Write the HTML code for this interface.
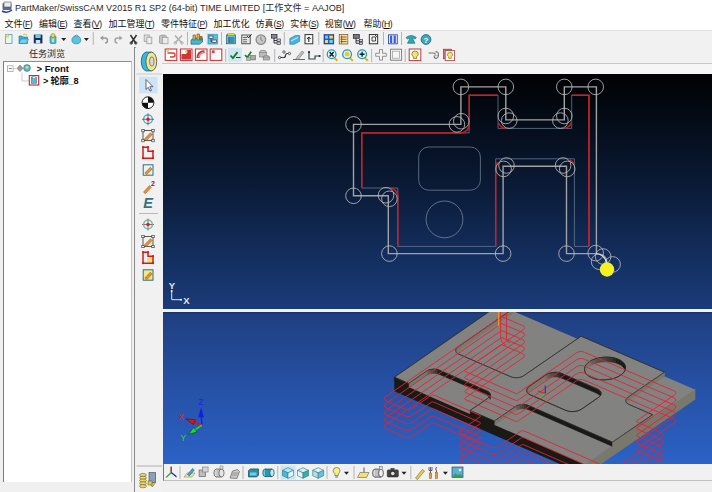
<!DOCTYPE html>
<html><head><meta charset="utf-8">
<style>
html,body{margin:0;padding:0;}
body{width:712px;height:492px;overflow:hidden;background:#f0f0f0;position:relative;font-family:"Liberation Sans","Noto Sans CJK SC",sans-serif;color:#111;}
.abs{position:absolute;}
#title{left:0;top:0;width:712px;height:16px;background:#fff;}
#title .t{position:absolute;left:15px;top:1px;font-size:9.5px;line-height:14px;white-space:nowrap;color:#2a2a2a;transform-origin:0 0;transform:scaleX(0.958);}
#menu i{font-style:normal;font-size:8.6px;letter-spacing:-0.45px;}
#menu{left:0;top:16px;width:712px;height:14px;background:#fff;}
#menu span{position:absolute;top:1px;font-size:9px;line-height:14px;white-space:nowrap;color:#111;}
#tb1{left:0;top:30px;width:712px;height:17.5px;background:#f1f1f1;border-bottom:1px solid #a4a4a4;border-top:1px solid #e2e2e2;box-sizing:border-box;}
#left{left:0;top:47px;width:134px;height:445px;background:#f0f0f0;border-right:1px solid #8a8a8a;}
#tree{left:3px;top:61px;width:129px;height:420.5px;background:#fff;border:1px solid #8c8c8c;border-right-color:#c4c4c4;border-left:1.5px solid #7c7c7c;border-bottom:none;box-sizing:border-box;}
#toolcol{left:136px;top:47px;width:26px;height:445px;background:#f1f1f1;}
#tb2{left:162px;top:47px;width:550px;height:17px;background:#f1f1f1;border-bottom:1px solid #c8c8c8;box-sizing:border-box;}
#gap{left:162px;top:64px;width:550px;height:10px;background:#f6f6f6;}
#vp1{left:163px;top:73.5px;width:549px;height:236px;background:linear-gradient(#000103 0%,#03080f 12%,#0a1933 45%,#143062 80%,#1b3c7a 100%);}
#div{left:163px;top:309.3px;width:549px;height:2.4px;background:#f4f4f4;}
#vp2{left:163px;top:311.7px;width:549px;height:152.3px;background:linear-gradient(#17306a 0%,#1f3f80 1.5%,#2651a6 50%,#2b62c6 100%);}
#tb3{left:163px;top:464px;width:549px;height:17px;background:#f1f1f1;border-bottom:1px solid #c0c0c0;border-left:1px solid #777;box-sizing:border-box;}
svg{position:absolute;left:0;top:0;}
svg text{font-family:"Liberation Sans","Noto Sans CJK SC",sans-serif;}
</style></head><body>
<div id="title" class="abs"><span class="t">PartMaker/SwissCAM V2015 R1 SP2 (64-bit) TIME LIMITED [工作文件 = AAJOB]</span></div>
<div id="menu" class="abs">
<span style="left:4.5px">文件<i>(<u>F</u>)</i></span>
<span style="left:39px">编辑<i>(<u>E</u>)</i></span>
<span style="left:73.5px">查看<i>(<u>V</u>)</i></span>
<span style="left:108.5px">加工管理<i>(<u>T</u>)</i></span>
<span style="left:161px">零件特征<i>(<u>P</u>)</i></span>
<span style="left:213.5px">加工优化</span>
<span style="left:255.5px">仿真<i>(<u>S</u>)</i></span>
<span style="left:290.2px">实体<i>(<u>S</u>)</i></span>
<span style="left:324.8px">视窗<i>(<u>W</u>)</i></span>
<span style="left:363.5px">帮助<i>(<u>H</u>)</i></span>
</div>
<div id="tb1" class="abs"></div>
<div id="left" class="abs"></div>
<div class="abs" style="left:29px;top:47px;font-size:9px;line-height:14px;color:#222;">任务浏览</div>
<div id="tree" class="abs"></div>
<div class="abs" style="left:36.5px;top:62px;font-size:9.5px;line-height:13px;font-weight:bold;color:#111;white-space:nowrap;">&gt; Front</div>
<div class="abs" style="left:43px;top:74.5px;font-size:9.2px;line-height:13px;font-weight:bold;color:#111;white-space:nowrap;letter-spacing:-0.2px;">&gt; 轮廓_8</div>
<div id="toolcol" class="abs"></div>
<div id="tb2" class="abs"></div>
<div id="gap" class="abs"></div>
<div id="vp1" class="abs"></div>
<div id="div" class="abs"></div>
<div id="vp2" class="abs"></div>
<div id="tb3" class="abs"></div>
<svg width="712" height="492" viewBox="0 0 712 492">
<defs>
<clipPath id="c1"><rect x="163" y="73" width="549" height="237"/></clipPath>
<clipPath id="c2"><rect x="163" y="312" width="549" height="152"/></clipPath>
</defs>
<g clip-path="url(#c1)">
<path d="M361.8 132.9 L469.2 132.9 L469.2 95.2 L498.0 95.2 L498.0 128.4 L571.7 128.4 L571.7 95.2 L589.0 95.2 L589.0 246.4 L574.4 246.4 L574.4 158.8 L495.7 158.8 L495.7 246.4 L397.8 246.4 L397.8 188.0 L361.8 188.0Z" fill="none" stroke="#66788e" stroke-width="0.8"/>
<rect x="418.7" y="147" width="61.7" height="43.2" rx="10" ry="10" fill="none" stroke="#5f7084" stroke-width="0.9"/>
<circle cx="444.5" cy="219.4" r="18.4" fill="none" stroke="#6a7b90" stroke-width="0.9"/>
<path d="M596.4 253.6 L596.4 86.9 L564.3 86.9 L564.3 119.9 L505.8 119.9 L505.8 86.9 L460.9 86.9 L460.9 124.4 L353.5 124.4 L353.5 195.8 L388.3 195.8 L388.3 253.6 L503.1 253.6 L503.1 166.2 L566.5 166.2 L566.5 253.6 L596.4 253.6" fill="none" stroke="#a2a2a2" stroke-width="1.4" stroke-linejoin="miter"/>
<path d="M361.8 188.0 L361.8 132.9 L460.7 132.9 L462.4 132.7 L464.0 132.3 L465.4 131.5 L466.7 130.4 L467.8 129.1 L468.6 127.7 L469.0 126.1 L469.2 124.4 L469.2 95.2 L498.0 95.2" fill="none" stroke="#d81a1a" stroke-width="1.5"/>
<path d="M571.7 95.2 L589.0 95.2 L589.0 246.4" fill="none" stroke="#d81a1a" stroke-width="1.5"/>
<path d="M495.7 246.4 L495.7 167.3 L495.9 165.6 L496.4 163.9 L497.2 162.4" fill="none" stroke="#d81a1a" stroke-width="1.5"/>
<path d="M397.8 246.4 L397.8 196.5 L397.7 195.0 L397.3 193.6 L396.7 192.2 L395.8 191.0 L394.8 190.0 L393.6 189.1 L392.2 188.5 L390.8 188.1" fill="none" stroke="#d81a1a" stroke-width="1.5"/>
<path d="M498.5 122.8 L499.5 124.8 L501.0 126.4 L502.9 127.6 L505.0 128.3" fill="none" stroke="#d81a1a" stroke-width="1.5"/>
<path d="M564.7 128.3 L566.8 127.6 L568.7 126.4 L570.2 124.8 L571.2 122.8" fill="none" stroke="#d81a1a" stroke-width="1.5"/>
<path d="M573.9 164.4 L573.0 162.6 L571.7 161.1 L570.1 159.9" fill="none" stroke="#d81a1a" stroke-width="1.5"/>
<circle cx="353.5" cy="124.4" r="7.8" fill="none" stroke="#b8b8b8" stroke-width="0.85"/>
<circle cx="460.9" cy="86.9" r="7.8" fill="none" stroke="#b8b8b8" stroke-width="0.85"/>
<circle cx="456.9" cy="124.4" r="7.8" fill="none" stroke="#b8b8b8" stroke-width="0.85"/>
<circle cx="461.3" cy="121.2" r="7.8" fill="none" stroke="#b8b8b8" stroke-width="0.85"/>
<circle cx="505.8" cy="86.9" r="7.8" fill="none" stroke="#b8b8b8" stroke-width="0.85"/>
<circle cx="564.3" cy="86.9" r="7.8" fill="none" stroke="#b8b8b8" stroke-width="0.85"/>
<circle cx="595.7" cy="86.9" r="7.8" fill="none" stroke="#b8b8b8" stroke-width="0.85"/>
<circle cx="505.8" cy="116.0" r="7.8" fill="none" stroke="#b8b8b8" stroke-width="0.85"/>
<circle cx="509.2" cy="120.6" r="7.8" fill="none" stroke="#b8b8b8" stroke-width="0.85"/>
<circle cx="564.3" cy="116.0" r="7.8" fill="none" stroke="#b8b8b8" stroke-width="0.85"/>
<circle cx="560.4" cy="120.6" r="7.8" fill="none" stroke="#b8b8b8" stroke-width="0.85"/>
<circle cx="506.5" cy="165.5" r="7.8" fill="none" stroke="#b8b8b8" stroke-width="0.85"/>
<circle cx="503.6" cy="168.9" r="7.8" fill="none" stroke="#b8b8b8" stroke-width="0.85"/>
<circle cx="563.1" cy="165.5" r="7.8" fill="none" stroke="#b8b8b8" stroke-width="0.85"/>
<circle cx="567.2" cy="168.9" r="7.8" fill="none" stroke="#b8b8b8" stroke-width="0.85"/>
<circle cx="503.1" cy="253.6" r="7.8" fill="none" stroke="#b8b8b8" stroke-width="0.85"/>
<circle cx="566.5" cy="253.6" r="7.8" fill="none" stroke="#b8b8b8" stroke-width="0.85"/>
<circle cx="595.7" cy="253.1" r="7.8" fill="none" stroke="#b8b8b8" stroke-width="0.85"/>
<circle cx="603.1" cy="256.5" r="7.8" fill="none" stroke="#b8b8b8" stroke-width="0.85"/>
<circle cx="599.1" cy="261.7" r="7.8" fill="none" stroke="#b8b8b8" stroke-width="0.85"/>
<circle cx="612.6" cy="264.4" r="7.8" fill="none" stroke="#b8b8b8" stroke-width="0.85"/>
<circle cx="353.5" cy="195.8" r="7.8" fill="none" stroke="#b8b8b8" stroke-width="0.85"/>
<circle cx="386.0" cy="195.2" r="7.8" fill="none" stroke="#b8b8b8" stroke-width="0.85"/>
<circle cx="389.4" cy="198.8" r="7.8" fill="none" stroke="#b8b8b8" stroke-width="0.85"/>
<circle cx="389.4" cy="253.6" r="7.8" fill="none" stroke="#b8b8b8" stroke-width="0.85"/>
<path d="M596 253.5 Q604 254 607 263" fill="none" stroke="#e8e8e8" stroke-width="1.2"/>
<circle cx="607" cy="269.5" r="7.2" fill="#f4f022"/>
<path d="M171.7 291 V299.7 H180.5" fill="none" stroke="#dfe3ea" stroke-width="1"/>
<circle cx="171.7" cy="291" r="1" fill="#fff"/><circle cx="181" cy="299.7" r="1" fill="#fff"/>
<text x="171.8" y="288.8" font-size="9.5" font-weight="bold" fill="#e4e8ee" text-anchor="middle">Y</text>
<text x="186.3" y="304" font-size="9.5" font-weight="bold" fill="#e4e8ee" text-anchor="middle">X</text>
</g>
<g clip-path="url(#c2)">
<polygon points="394.3,381.4 502.5,306.5 695.4,389.7 585.0,465.2" fill="#828281"/>
<polygon points="394.3,380.8 585.0,464.6 585.0,475.0 394.3,391.2" fill="rgb(25,25,22)"/>
<polygon points="585.0,464.6 695.4,389.1 695.4,399.5 585.0,475.0" fill="rgb(120,120,108)"/>
<polygon points="612.4,442.2 528.6,405.6 527.1,405.0 525.4,404.7 523.6,404.5 521.7,404.6 519.9,404.8 518.2,405.3 516.6,405.9 515.3,406.6 494.3,421.1 470.1,410.5 487.9,398.3 488.9,397.4 489.7,396.4 490.1,395.4 490.1,394.4 489.8,393.4 489.1,392.5 488.1,391.6 486.8,390.9 439.4,370.2 437.9,369.7 436.3,369.3 434.5,369.2 432.7,369.2 430.9,369.5 429.2,369.9 427.6,370.5 426.3,371.3 408.7,383.5 394.3,377.2 502.5,302.3 514.7,307.6 458.0,346.9 456.9,347.7 456.2,348.7 455.8,349.7 455.7,350.7 456.0,351.7 456.7,352.7 457.7,353.5 459.0,354.2 510.7,376.7 512.2,377.2 513.9,377.6 515.7,377.7 517.5,377.7 519.3,377.4 521.0,377.0 522.6,376.4 523.9,375.6 581.1,336.2 664.5,372.2 628.1,397.1 627.0,398.0 626.3,399.0 625.9,400.0 625.8,401.1 626.2,402.1 626.8,403.0 627.8,403.8 629.1,404.5 652.6,414.7" fill="#828281" stroke="#3a3a36" stroke-width="0.6"/>
<polygon points="612.4,442.2 528.6,405.6 528.6,409.8 612.4,446.4" fill="rgb(25,25,22)" stroke="rgb(25,25,22)" stroke-width="0.4"/>
<polygon points="528.6,405.6 527.1,405.0 527.1,409.2 528.6,409.8" fill="rgb(33,33,29)" stroke="rgb(33,33,29)" stroke-width="0.4"/>
<polygon points="527.1,405.0 525.4,404.7 525.4,408.9 527.1,409.2" fill="rgb(47,47,42)" stroke="rgb(47,47,42)" stroke-width="0.4"/>
<polygon points="525.4,404.7 523.6,404.5 523.6,408.7 525.4,408.9" fill="rgb(58,58,51)" stroke="rgb(58,58,51)" stroke-width="0.4"/>
<polygon points="523.6,404.5 521.7,404.6 521.7,408.8 523.6,408.7" fill="rgb(67,67,60)" stroke="rgb(67,67,60)" stroke-width="0.4"/>
<polygon points="521.7,404.6 519.9,404.8 519.9,409.0 521.7,408.8" fill="rgb(77,77,69)" stroke="rgb(77,77,69)" stroke-width="0.4"/>
<polygon points="519.9,404.8 518.2,405.3 518.2,409.5 519.9,409.0" fill="rgb(86,86,78)" stroke="rgb(86,86,78)" stroke-width="0.4"/>
<polygon points="518.2,405.3 516.6,405.9 516.6,410.1 518.2,409.5" fill="rgb(97,97,87)" stroke="rgb(97,97,87)" stroke-width="0.4"/>
<polygon points="516.6,405.9 515.3,406.6 515.3,410.8 516.6,410.1" fill="rgb(111,111,100)" stroke="rgb(111,111,100)" stroke-width="0.4"/>
<polygon points="515.3,406.6 494.3,421.1 494.3,425.3 515.3,410.8" fill="rgb(120,120,108)" stroke="rgb(120,120,108)" stroke-width="0.4"/>
<polygon points="494.3,421.1 470.1,410.5 470.1,414.7 494.3,425.3" fill="rgb(25,25,22)" stroke="rgb(25,25,22)" stroke-width="0.4"/>
<polygon points="490.1,395.4 490.1,394.4 490.1,398.6 490.1,399.6" fill="rgb(25,25,22)" stroke="rgb(25,25,22)" stroke-width="0.4"/>
<polygon points="490.1,394.4 489.8,393.4 489.8,397.6 490.1,398.6" fill="rgb(25,25,22)" stroke="rgb(25,25,22)" stroke-width="0.4"/>
<polygon points="489.8,393.4 489.1,392.5 489.1,396.7 489.8,397.6" fill="rgb(25,25,22)" stroke="rgb(25,25,22)" stroke-width="0.4"/>
<polygon points="489.1,392.5 488.1,391.6 488.1,395.8 489.1,396.7" fill="rgb(25,25,22)" stroke="rgb(25,25,22)" stroke-width="0.4"/>
<polygon points="488.1,391.6 486.8,390.9 486.8,395.1 488.1,395.8" fill="rgb(25,25,22)" stroke="rgb(25,25,22)" stroke-width="0.4"/>
<polygon points="486.8,390.9 439.4,370.2 439.4,374.4 486.8,395.1" fill="rgb(25,25,22)" stroke="rgb(25,25,22)" stroke-width="0.4"/>
<polygon points="439.4,370.2 437.9,369.7 437.9,373.9 439.4,374.4" fill="rgb(33,33,29)" stroke="rgb(33,33,29)" stroke-width="0.4"/>
<polygon points="437.9,369.7 436.3,369.3 436.3,373.5 437.9,373.9" fill="rgb(47,47,42)" stroke="rgb(47,47,42)" stroke-width="0.4"/>
<polygon points="436.3,369.3 434.5,369.2 434.5,373.4 436.3,373.5" fill="rgb(58,58,51)" stroke="rgb(58,58,51)" stroke-width="0.4"/>
<polygon points="434.5,369.2 432.7,369.2 432.7,373.4 434.5,373.4" fill="rgb(67,67,60)" stroke="rgb(67,67,60)" stroke-width="0.4"/>
<polygon points="432.7,369.2 430.9,369.5 430.9,373.7 432.7,373.4" fill="rgb(77,77,69)" stroke="rgb(77,77,69)" stroke-width="0.4"/>
<polygon points="430.9,369.5 429.2,369.9 429.2,374.1 430.9,373.7" fill="rgb(86,86,78)" stroke="rgb(86,86,78)" stroke-width="0.4"/>
<polygon points="429.2,369.9 427.6,370.5 427.6,374.7 429.2,374.1" fill="rgb(97,97,87)" stroke="rgb(97,97,87)" stroke-width="0.4"/>
<polygon points="427.6,370.5 426.3,371.3 426.3,375.5 427.6,374.7" fill="rgb(111,111,100)" stroke="rgb(111,111,100)" stroke-width="0.4"/>
<polygon points="426.3,371.3 408.7,383.5 408.7,387.7 426.3,375.5" fill="rgb(120,120,108)" stroke="rgb(120,120,108)" stroke-width="0.4"/>
<polygon points="408.7,383.5 394.3,377.2 394.3,381.4 408.7,387.7" fill="rgb(25,25,22)" stroke="rgb(25,25,22)" stroke-width="0.4"/>
<polygon points="514.7,307.6 458.0,346.9 458.0,351.1 514.7,311.8" fill="rgb(120,120,108)" stroke="rgb(120,120,108)" stroke-width="0.4"/>
<polygon points="458.0,346.9 456.9,347.7 456.9,351.9 458.0,351.1" fill="rgb(120,120,108)" stroke="rgb(120,120,108)" stroke-width="0.4"/>
<polygon points="456.9,347.7 456.2,348.7 456.2,352.9 456.9,351.9" fill="rgb(120,120,108)" stroke="rgb(120,120,108)" stroke-width="0.4"/>
<polygon points="456.2,348.7 455.8,349.7 455.8,353.9 456.2,352.9" fill="rgb(120,120,108)" stroke="rgb(120,120,108)" stroke-width="0.4"/>
<polygon points="664.5,372.2 628.1,397.1 628.1,401.3 664.5,376.4" fill="rgb(120,120,108)" stroke="rgb(120,120,108)" stroke-width="0.4"/>
<polygon points="628.1,397.1 627.0,398.0 627.0,402.2 628.1,401.3" fill="rgb(120,120,108)" stroke="rgb(120,120,108)" stroke-width="0.4"/>
<polygon points="627.0,398.0 626.3,399.0 626.3,403.2 627.0,402.2" fill="rgb(120,120,108)" stroke="rgb(120,120,108)" stroke-width="0.4"/>
<polygon points="626.3,399.0 625.9,400.0 625.9,404.2 626.3,403.2" fill="rgb(120,120,108)" stroke="rgb(120,120,108)" stroke-width="0.4"/>
<polygon points="652.6,414.7 612.4,442.2 612.4,446.4 652.6,418.9" fill="rgb(120,120,108)" stroke="rgb(120,120,108)" stroke-width="0.4"/>
<polygon points="612.4,442.2 528.6,405.6 527.1,405.0 525.4,404.7 523.6,404.5 521.7,404.6 519.9,404.8 518.2,405.3 516.6,405.9 515.3,406.6 494.3,421.1 470.1,410.5 487.9,398.3 488.9,397.4 489.7,396.4 490.1,395.4 490.1,394.4 489.8,393.4 489.1,392.5 488.1,391.6 486.8,390.9 439.4,370.2 437.9,369.7 436.3,369.3 434.5,369.2 432.7,369.2 430.9,369.5 429.2,369.9 427.6,370.5 426.3,371.3 408.7,383.5 394.3,377.2 502.5,302.3 514.7,307.6 458.0,346.9 456.9,347.7 456.2,348.7 455.8,349.7 455.7,350.7 456.0,351.7 456.7,352.7 457.7,353.5 459.0,354.2 510.7,376.7 512.2,377.2 513.9,377.6 515.7,377.7 517.5,377.7 519.3,377.4 521.0,377.0 522.6,376.4 523.9,375.6 581.1,336.2 664.5,372.2 628.1,397.1 627.0,398.0 626.3,399.0 625.9,400.0 625.8,401.1 626.2,402.1 626.8,403.0 627.8,403.8 629.1,404.5 652.6,414.7" fill="none" stroke="#2e2e2a" stroke-width="0.7"/>
<polygon points="530.6,395.0 528.7,393.9 527.4,392.5 526.8,390.9 526.9,389.3 527.8,387.7 529.4,386.3 546.1,374.8 548.3,373.6 550.9,372.8 553.7,372.4 556.6,372.3 559.4,372.7 561.8,373.5 597.2,388.9 599.1,390.0 600.5,391.4 601.1,392.9 600.9,394.5 600.0,396.1 598.4,397.5 581.6,409.1 579.4,410.3 576.8,411.1 574.0,411.5 571.0,411.6 568.3,411.2 565.8,410.4" fill="#828281" stroke="#33332f" stroke-width="0.7"/>
<clipPath id="cp0"><polygon points="530.6,395.0 528.7,393.9 527.4,392.5 526.8,390.9 526.9,389.3 527.8,387.7 529.4,386.3 546.1,374.8 548.3,373.6 550.9,372.8 553.7,372.4 556.6,372.3 559.4,372.7 561.8,373.5 597.2,388.9 599.1,390.0 600.5,391.4 601.1,392.9 600.9,394.5 600.0,396.1 598.4,397.5 581.6,409.1 579.4,410.3 576.8,411.1 574.0,411.5 571.0,411.6 568.3,411.2 565.8,410.4"/></clipPath>
<g clip-path="url(#cp0)"><polygon points="526.9,389.3 527.8,387.7 527.8,392.4 526.9,394.0" fill="rgb(120,120,108)" stroke="rgb(120,120,108)" stroke-width="0.4"/>
<polygon points="527.8,387.7 529.4,386.3 529.4,391.0 527.8,392.4" fill="rgb(120,120,108)" stroke="rgb(120,120,108)" stroke-width="0.4"/>
<polygon points="529.4,386.3 546.1,374.8 546.1,379.5 529.4,391.0" fill="rgb(120,120,108)" stroke="rgb(120,120,108)" stroke-width="0.4"/>
<polygon points="546.1,374.8 548.3,373.6 548.3,378.3 546.1,379.5" fill="rgb(108,108,97)" stroke="rgb(108,108,97)" stroke-width="0.4"/>
<polygon points="548.3,373.6 550.9,372.8 550.9,377.5 548.3,378.3" fill="rgb(92,92,82)" stroke="rgb(92,92,82)" stroke-width="0.4"/>
<polygon points="550.9,372.8 553.7,372.4 553.7,377.1 550.9,377.5" fill="rgb(78,78,70)" stroke="rgb(78,78,70)" stroke-width="0.4"/>
<polygon points="553.7,372.4 556.6,372.3 556.6,377.0 553.7,377.1" fill="rgb(66,66,59)" stroke="rgb(66,66,59)" stroke-width="0.4"/>
<polygon points="556.6,372.3 559.4,372.7 559.4,377.4 556.6,377.0" fill="rgb(52,52,47)" stroke="rgb(52,52,47)" stroke-width="0.4"/>
<polygon points="559.4,372.7 561.8,373.5 561.8,378.2 559.4,377.4" fill="rgb(36,36,32)" stroke="rgb(36,36,32)" stroke-width="0.4"/>
<polygon points="561.8,373.5 597.2,388.9 597.2,393.6 561.8,378.2" fill="rgb(25,25,22)" stroke="rgb(25,25,22)" stroke-width="0.4"/>
<polygon points="597.2,388.9 599.1,390.0 599.1,394.7 597.2,393.6" fill="rgb(25,25,22)" stroke="rgb(25,25,22)" stroke-width="0.4"/>
<polygon points="599.1,390.0 600.5,391.4 600.5,396.1 599.1,394.7" fill="rgb(25,25,22)" stroke="rgb(25,25,22)" stroke-width="0.4"/>
<polygon points="600.5,391.4 601.1,392.9 601.1,397.6 600.5,396.1" fill="rgb(25,25,22)" stroke="rgb(25,25,22)" stroke-width="0.4"/>
<polygon points="601.1,392.9 600.9,394.5 600.9,399.2 601.1,397.6" fill="rgb(25,25,22)" stroke="rgb(25,25,22)" stroke-width="0.4"/></g>
<polygon points="530.6,395.0 528.7,393.9 527.4,392.5 526.8,390.9 526.9,389.3 527.8,387.7 529.4,386.3 546.1,374.8 548.3,373.6 550.9,372.8 553.7,372.4 556.6,372.3 559.4,372.7 561.8,373.5 597.2,388.9 599.1,390.0 600.5,391.4 601.1,392.9 600.9,394.5 600.0,396.1 598.4,397.5 581.6,409.1 579.4,410.3 576.8,411.1 574.0,411.5 571.0,411.6 568.3,411.2 565.8,410.4" fill="none" stroke="#2a2a26" stroke-width="0.8"/>
<polygon points="589.4,361.7 591.6,360.3 594.2,359.2 597.1,358.3 600.2,357.6 603.4,357.2 606.6,357.1 609.8,357.2 612.9,357.6 615.7,358.3 618.4,359.3 620.6,360.4 622.5,361.8 624.0,363.3 625.0,365.0 625.5,366.7 625.5,368.5 625.0,370.3 624.0,372.1 622.5,373.7 620.6,375.2 618.3,376.6 615.7,377.7 612.9,378.7 609.8,379.3 606.6,379.7 603.4,379.9 600.2,379.7 597.1,379.3 594.2,378.6 591.6,377.6 589.3,376.5 587.4,375.1 586.0,373.6 585.0,371.9 584.5,370.2 584.5,368.4 585.0,366.6 586.0,364.9 587.5,363.2" fill="#828281" stroke="#33332f" stroke-width="0.7"/>
<clipPath id="cp1"><polygon points="589.4,361.7 591.6,360.3 594.2,359.2 597.1,358.3 600.2,357.6 603.4,357.2 606.6,357.1 609.8,357.2 612.9,357.6 615.7,358.3 618.4,359.3 620.6,360.4 622.5,361.8 624.0,363.3 625.0,365.0 625.5,366.7 625.5,368.5 625.0,370.3 624.0,372.1 622.5,373.7 620.6,375.2 618.3,376.6 615.7,377.7 612.9,378.7 609.8,379.3 606.6,379.7 603.4,379.9 600.2,379.7 597.1,379.3 594.2,378.6 591.6,377.6 589.3,376.5 587.4,375.1 586.0,373.6 585.0,371.9 584.5,370.2 584.5,368.4 585.0,366.6 586.0,364.9 587.5,363.2"/></clipPath>
<g clip-path="url(#cp1)"><polygon points="589.4,361.7 591.6,360.3 591.6,365.0 589.4,366.4" fill="rgb(113,113,101)" stroke="rgb(113,113,101)" stroke-width="0.4"/>
<polygon points="591.6,360.3 594.2,359.2 594.2,363.9 591.6,365.0" fill="rgb(101,101,91)" stroke="rgb(101,101,91)" stroke-width="0.4"/>
<polygon points="594.2,359.2 597.1,358.3 597.1,363.0 594.2,363.9" fill="rgb(92,92,82)" stroke="rgb(92,92,82)" stroke-width="0.4"/>
<polygon points="597.1,358.3 600.2,357.6 600.2,362.3 597.1,363.0" fill="rgb(83,83,75)" stroke="rgb(83,83,75)" stroke-width="0.4"/>
<polygon points="600.2,357.6 603.4,357.2 603.4,361.9 600.2,362.3" fill="rgb(76,76,68)" stroke="rgb(76,76,68)" stroke-width="0.4"/>
<polygon points="603.4,357.2 606.6,357.1 606.6,361.8 603.4,361.9" fill="rgb(68,68,61)" stroke="rgb(68,68,61)" stroke-width="0.4"/>
<polygon points="606.6,357.1 609.8,357.2 609.8,361.9 606.6,361.8" fill="rgb(61,61,54)" stroke="rgb(61,61,54)" stroke-width="0.4"/>
<polygon points="609.8,357.2 612.9,357.6 612.9,362.3 609.8,361.9" fill="rgb(52,52,47)" stroke="rgb(52,52,47)" stroke-width="0.4"/>
<polygon points="612.9,357.6 615.7,358.3 615.7,363.0 612.9,362.3" fill="rgb(43,43,38)" stroke="rgb(43,43,38)" stroke-width="0.4"/>
<polygon points="615.7,358.3 618.4,359.3 618.4,364.0 615.7,363.0" fill="rgb(31,31,28)" stroke="rgb(31,31,28)" stroke-width="0.4"/>
<polygon points="618.4,359.3 620.6,360.4 620.6,365.1 618.4,364.0" fill="rgb(25,25,22)" stroke="rgb(25,25,22)" stroke-width="0.4"/>
<polygon points="620.6,360.4 622.5,361.8 622.5,366.5 620.6,365.1" fill="rgb(25,25,22)" stroke="rgb(25,25,22)" stroke-width="0.4"/>
<polygon points="622.5,361.8 624.0,363.3 624.0,368.0 622.5,366.5" fill="rgb(25,25,22)" stroke="rgb(25,25,22)" stroke-width="0.4"/>
<polygon points="624.0,363.3 625.0,365.0 625.0,369.7 624.0,368.0" fill="rgb(25,25,22)" stroke="rgb(25,25,22)" stroke-width="0.4"/>
<polygon points="625.0,365.0 625.5,366.7 625.5,371.4 625.0,369.7" fill="rgb(25,25,22)" stroke="rgb(25,25,22)" stroke-width="0.4"/>
<polygon points="625.5,366.7 625.5,368.5 625.5,373.2 625.5,371.4" fill="rgb(25,25,22)" stroke="rgb(25,25,22)" stroke-width="0.4"/>
<polygon points="584.5,368.4 585.0,366.6 585.0,371.3 584.5,373.1" fill="rgb(120,120,108)" stroke="rgb(120,120,108)" stroke-width="0.4"/>
<polygon points="585.0,366.6 586.0,364.9 586.0,369.6 585.0,371.3" fill="rgb(120,120,108)" stroke="rgb(120,120,108)" stroke-width="0.4"/>
<polygon points="586.0,364.9 587.5,363.2 587.5,367.9 586.0,369.6" fill="rgb(120,120,108)" stroke="rgb(120,120,108)" stroke-width="0.4"/>
<polygon points="587.5,363.2 589.4,361.7 589.4,366.4 587.5,367.9" fill="rgb(120,120,108)" stroke="rgb(120,120,108)" stroke-width="0.4"/></g>
<polygon points="589.4,361.7 591.6,360.3 594.2,359.2 597.1,358.3 600.2,357.6 603.4,357.2 606.6,357.1 609.8,357.2 612.9,357.6 615.7,358.3 618.4,359.3 620.6,360.4 622.5,361.8 624.0,363.3 625.0,365.0 625.5,366.7 625.5,368.5 625.0,370.3 624.0,372.1 622.5,373.7 620.6,375.2 618.3,376.6 615.7,377.7 612.9,378.7 609.8,379.3 606.6,379.7 603.4,379.9 600.2,379.7 597.1,379.3 594.2,378.6 591.6,377.6 589.3,376.5 587.4,375.1 586.0,373.6 585.0,371.9 584.5,370.2 584.5,368.4 585.0,366.6 586.0,364.9 587.5,363.2" fill="none" stroke="#2a2a26" stroke-width="0.8"/>
<path d="M501.5 316.5 L385.8 396.6 L384.5 397.8 L384.2 398.9 L384.8 400.0 L386.4 400.9 L404.7 409.0 L406.8 409.6 L408.7 409.7 L410.6 409.3 L412.4 408.3 L431.0 395.5 L431.8 395.1 L432.5 394.9 L433.3 395.0 L434.1 395.2 L479.6 415.2 L480.3 415.6 L480.5 416.0 L480.4 416.4 L479.9 416.9 L461.2 429.8 L459.9 431.0 L459.6 432.1 L460.2 433.1 L461.8 434.1 L491.0 447.0 L493.1 447.6 L495.1 447.7 L497.0 447.3 L498.8 446.3 L520.8 431.2 L521.6 430.8 L522.3 430.6 L523.1 430.7 L524.0 430.9 L609.1 468.2 L611.2 468.9 L613.2 469.0 L615.1 468.5 L617.0 467.6 L661.8 436.9 L663.1 435.7 L663.5 434.6 L662.8 433.5 L661.2 432.6 L637.4 422.2 L636.7 421.9 L636.5 421.4 L636.6 421.0 L637.1 420.5 L674.3 395.1 L675.6 393.9 L675.9 392.7 L675.3 391.7 L673.6 390.7 L584.3 352.2 L582.2 351.6 L580.2 351.5 L578.3 351.9 L576.4 352.9 L518.4 392.9 L517.6 393.3 L516.9 393.5 L516.1 393.5 L515.2 393.2 L465.4 371.5 L464.8 371.1 L464.5 370.7 L464.7 370.3 L465.2 369.8 L523.0 329.9 L524.3 328.6 L524.6 327.5 L524.0 326.5 L522.4 325.5 L501.5 316.5" fill="none" stroke="#ea2030" stroke-width="0.9" stroke-linejoin="round"/>
<path d="M501.5 323.5 L385.8 403.6 L384.5 404.8 L384.2 405.9 L384.8 407.0 L386.4 407.9 L404.7 416.0 L406.8 416.6 L408.7 416.7 L410.6 416.3 L412.4 415.3 L431.0 402.5 L431.8 402.1 L432.5 401.9 L433.3 402.0 L434.1 402.2 L479.6 422.2 L480.3 422.6 L480.5 423.0 L480.4 423.4 L479.9 423.9 L461.2 436.8 L459.9 438.0 L459.6 439.1 L460.2 440.1 L461.8 441.1 L491.0 454.0 L493.1 454.6 L495.1 454.7 L497.0 454.3 L498.8 453.3 L520.8 438.2 L521.6 437.8 L522.3 437.6 L523.1 437.7 L524.0 437.9 L609.1 475.2 L611.2 475.9 L613.2 476.0 L615.1 475.5 L617.0 474.6 L661.8 443.9 L663.1 442.7 L663.5 441.6 L662.8 440.5 L661.2 439.6 L637.4 429.2 L636.7 428.9 L636.5 428.4 L636.6 428.0 L637.1 427.5 L674.3 402.1 L675.6 400.9 L675.9 399.7 L675.3 398.7 L673.6 397.7 L584.3 359.2 L582.2 358.6 L580.2 358.5 L578.3 358.9 L576.4 359.9 L518.4 399.9 L517.6 400.3 L516.9 400.5 L516.1 400.5 L515.2 400.2 L465.4 378.5 L464.8 378.1 L464.5 377.7 L464.7 377.3 L465.2 376.8 L523.0 336.9 L524.3 335.6 L524.6 334.5 L524.0 333.5 L522.4 332.5 L501.5 323.5" fill="none" stroke="#ea2030" stroke-width="0.9" stroke-linejoin="round"/>
<path d="M501.5 330.5 L385.8 410.6 L384.5 411.8 L384.2 412.9 L384.8 414.0 L386.4 414.9 L404.7 423.0 L406.8 423.6 L408.7 423.7 L410.6 423.3 L412.4 422.3 L431.0 409.5 L431.8 409.1 L432.5 408.9 L433.3 409.0 L434.1 409.2 L479.6 429.2 L480.3 429.6 L480.5 430.0 L480.4 430.4 L479.9 430.9 L461.2 443.8 L459.9 445.0 L459.6 446.1 L460.2 447.1 L461.8 448.1 L491.0 461.0 L493.1 461.6 L495.1 461.7 L497.0 461.3 L498.8 460.3 L520.8 445.2 L521.6 444.8 L522.3 444.6 L523.1 444.7 L524.0 444.9 L609.1 482.2 L611.2 482.9 L613.2 483.0 L615.1 482.5 L617.0 481.6 L661.8 450.9 L663.1 449.7 L663.5 448.6 L662.8 447.5 L661.2 446.6 L637.4 436.2 L636.7 435.9 L636.5 435.4 L636.6 435.0 L637.1 434.5 L674.3 409.1 L675.6 407.9 L675.9 406.7 L675.3 405.7 L673.6 404.7 L584.3 366.2 L582.2 365.6 L580.2 365.5 L578.3 365.9 L576.4 366.9 L518.4 406.9 L517.6 407.3 L516.9 407.5 L516.1 407.5 L515.2 407.2 L465.4 385.5 L464.8 385.1 L464.5 384.7 L464.7 384.3 L465.2 383.8 L523.0 343.9 L524.3 342.6 L524.6 341.5 L524.0 340.5 L522.4 339.5 L501.5 330.5" fill="none" stroke="#ea2030" stroke-width="0.9" stroke-linejoin="round"/>
<path d="M501.5 337.5 L385.8 417.6 L384.5 418.8 L384.2 419.9 L384.8 421.0 L386.4 421.9 L404.7 430.0 L406.8 430.6 L408.7 430.7 L410.6 430.3 L412.4 429.3 L431.0 416.5 L431.8 416.1 L432.5 415.9 L433.3 416.0 L434.1 416.2 L479.6 436.2 L480.3 436.6 L480.5 437.0 L480.4 437.4 L479.9 437.9 L461.2 450.8 L459.9 452.0 L459.6 453.1 L460.2 454.1 L461.8 455.1 L491.0 468.0 L493.1 468.6 L495.1 468.7 L497.0 468.3 L498.8 467.3 L520.8 452.2 L521.6 451.8 L522.3 451.6 L523.1 451.7 L524.0 451.9 L609.1 489.2 L611.2 489.9 L613.2 490.0 L615.1 489.5 L617.0 488.6 L661.8 457.9 L663.1 456.7 L663.5 455.6 L662.8 454.5 L661.2 453.6 L637.4 443.2 L636.7 442.9 L636.5 442.4 L636.6 442.0 L637.1 441.5 L674.3 416.1 L675.6 414.9 L675.9 413.7 L675.3 412.7 L673.6 411.7 L584.3 373.2 L582.2 372.6 L580.2 372.5 L578.3 372.9 L576.4 373.9 L518.4 413.9 L517.6 414.3 L516.9 414.5 L516.1 414.5 L515.2 414.2 L465.4 392.5 L464.8 392.1 L464.5 391.7 L464.7 391.3 L465.2 390.8 L523.0 350.9 L524.3 349.6 L524.6 348.5 L524.0 347.5 L522.4 346.5 L501.5 337.5" fill="none" stroke="#ea2030" stroke-width="0.9" stroke-linejoin="round"/>
<path d="M501.5 344.5 L385.8 424.6 L384.5 425.8 L384.2 426.9 L384.8 428.0 L386.4 428.9 L404.7 437.0 L406.8 437.6 L408.7 437.7 L410.6 437.3 L412.4 436.3 L431.0 423.5 L431.8 423.1 L432.5 422.9 L433.3 423.0 L434.1 423.2 L479.6 443.2 L480.3 443.6 L480.5 444.0 L480.4 444.4 L479.9 444.9 L461.2 457.8 L459.9 459.0 L459.6 460.1 L460.2 461.1 L461.8 462.1 L491.0 475.0 L493.1 475.6 L495.1 475.7 L497.0 475.3 L498.8 474.3 L520.8 459.2 L521.6 458.8 L522.3 458.6 L523.1 458.7 L524.0 458.9 L609.1 496.2 L611.2 496.9 L613.2 497.0 L615.1 496.5 L617.0 495.6 L661.8 464.9 L663.1 463.7 L663.5 462.6 L662.8 461.5 L661.2 460.6 L637.4 450.2 L636.7 449.9 L636.5 449.4 L636.6 449.0 L637.1 448.5 L674.3 423.1 L675.6 421.9 L675.9 420.7 L675.3 419.7 L673.6 418.7 L584.3 380.2 L582.2 379.6 L580.2 379.5 L578.3 379.9 L576.4 380.9 L518.4 420.9 L517.6 421.3 L516.9 421.5 L516.1 421.5 L515.2 421.2 L465.4 399.5 L464.8 399.1 L464.5 398.7 L464.7 398.3 L465.2 397.8 L523.0 357.9 L524.3 356.6 L524.6 355.5 L524.0 354.5 L522.4 353.5 L501.5 344.5" fill="none" stroke="#ea2030" stroke-width="0.9" stroke-linejoin="round"/>
<path d="M498.7 312 V326" stroke="#f0a020" stroke-width="1"/><path d="M500.6 312 V337 Q501 343 506 345" fill="none" stroke="#e8202c" stroke-width="0.9"/><path d="M506.5 312 V338 Q507 342 510 343" fill="none" stroke="#e8202c" stroke-width="0.9"/><circle cx="506.5" cy="322.7" r="1" fill="#e020e0"/>
<path d="M545.3 393.5 V385.5" stroke="#2030e0" stroke-width="1.2"/><path d="M545.3 393.5 L540 397.5" stroke="#20d030" stroke-width="1.2"/><path d="M545.3 393.5 L538 391" stroke="#e02020" stroke-width="1.2"/>
<path d="M201.9 425.2 L201.3 416" stroke="#1020e8" stroke-width="1.4"/>
<polygon points="201.1,407.3 204,417.2 198.3,417.2" fill="#1020e8"/>
<path d="M201.9 425.2 L194 422.3" stroke="#e81010" stroke-width="1.6"/>
<polygon points="185.7,418.9 195.5,419.8 193.5,424.6" fill="#e81010" stroke="#301010" stroke-width="0.5"/>
<path d="M201.9 425.2 L195 429.8" stroke="#20e020" stroke-width="1.6"/>
<polygon points="188.5,434.2 193.6,427.6 197,432" fill="#20e020" stroke="#103010" stroke-width="0.5"/>
<text x="200.8" y="404.8" font-size="8.5" fill="#1830e8" text-anchor="middle" font-weight="bold">Z</text>
<text x="181" y="420" font-size="8.5" fill="#e82020" text-anchor="middle">X</text>
<text x="183.4" y="440.5" font-size="8.5" fill="#20e020" text-anchor="middle">Y</text>
</g>
<rect x="2.5" y="3.0" width="9.0" height="7.0" fill="#5a6a90" rx="1.0"/>
<rect x="4.0" y="2.0" width="7.0" height="5.0" fill="#e8ecf4" stroke="#555" stroke-width="0.6"/>
<path d="M2 11 Q7 14 12 10" fill="none" stroke="#2040c0" stroke-width="1.6" />
<rect x="5.5" y="34.5" width="6.5" height="9.0" fill="#e6f6fa" stroke="#4aa0b8" stroke-width="0.8"/>
<path d="M4.5 34 l2 1 l1-2 l0.6 2 l2 0 l-1.6 1.4 l0.6 2 l-1.8-1.2 l-1.8 1.2 l0.6-2z" fill="#f4d840" />
<path d="M19 36 h3 l1 1 h4.5 v6.5 h-8.5z" fill="#38b0d8" stroke="#1878a0" stroke-width="0.6" />
<path d="M19 43.5 l2-4.5 h7.5 l-2 4.5z" fill="#70d0f0" stroke="#1878a0" stroke-width="0.5" />
<path d="M23 35 q2-2 4 0" fill="none" stroke="#e8c020" stroke-width="1.0" />
<rect x="33.8" y="34.6" width="8.6" height="8.8" fill="#1c2c58"/>
<rect x="35.3" y="34.6" width="5.4" height="3.4" fill="#60d0f0"/>
<rect x="35.8" y="40.0" width="4.4" height="3.4" fill="#c8e8f4"/>
<rect x="50.0" y="36.0" width="6.0" height="7.5" fill="#48c0e0" stroke="#207890" stroke-width="0.6" rx="1.0"/>
<circle cx="53.0" cy="35.5" r="2.0" fill="#f0d848" stroke="#807020" stroke-width="0.5"/>
<rect x="52.0" y="38.5" width="2.0" height="3.5" fill="#f0e070"/>
<path d="M61.2 38.0 h5 l-2.5 3z" fill="#222" />
<ellipse cx="76.3" cy="40.0" rx="4.4" ry="3.8" fill="#58c4e4" stroke="#2888a8" stroke-width="0.7"/>
<path d="M74 36.5 q2.3-3 4.6 0" fill="none" stroke="#789" stroke-width="1.0" />
<path d="M83.9 38.0 h5 l-2.5 3z" fill="#222" />
<path d="M93.3 32.0 V45.0" fill="none" stroke="#b4b4b4" stroke-width="1.0" />
<path d="M101 38 h4 q2.5 0 2.5 2.5 q0 2.5-2.5 2.5" fill="none" stroke="#9a9a9a" stroke-width="1.5" />
<path d="M100 38 l3.2-2.6 v5.2z" fill="#9a9a9a" />
<path d="M121.5 38 h-4 q-2.5 0-2.5 2.5 q0 2.5 2.5 2.5" fill="none" stroke="#a4a4a4" stroke-width="1.5" />
<path d="M122.5 38 l-3.2-2.6 v5.2z" fill="#a4a4a4" />
<path d="M130.5 35 L136 43.5 M136.5 35 L131 43.5" fill="none" stroke="#333" stroke-width="1.5" />
<circle cx="131.2" cy="43.0" r="1.2" fill="none" stroke="#333" stroke-width="0.9"/>
<circle cx="135.8" cy="43.0" r="1.2" fill="none" stroke="#333" stroke-width="0.9"/>
<rect x="144.2" y="35.0" width="5.0" height="6.5" fill="#e4e4e4" stroke="#9a9a9a" stroke-width="0.8"/>
<rect x="146.8" y="37.2" width="5.0" height="6.5" fill="#ececec" stroke="#9a9a9a" stroke-width="0.8"/>
<rect x="159.5" y="35.5" width="7.0" height="8.0" fill="#c4c4c4" stroke="#999" stroke-width="0.8" rx="1.0"/>
<rect x="162.5" y="37.5" width="5.5" height="6.3" fill="#ececec" stroke="#9a9a9a" stroke-width="0.7"/>
<rect x="161.5" y="34.6" width="3.0" height="1.8" fill="#aaa"/>
<path d="M175 35.5 L182 43 M182 35.5 L175 43" fill="none" stroke="#b0b0b0" stroke-width="1.7" />
<circle cx="175.3" cy="43.0" r="1.3" fill="none" stroke="#b0b0b0" stroke-width="0.9"/>
<circle cx="182.0" cy="43.0" r="1.3" fill="none" stroke="#b0b0b0" stroke-width="0.9"/>
<path d="M187.5 32.0 V45.0" fill="none" stroke="#b4b4b4" stroke-width="1.0" />
<path d="M191 40 l3-2 h8.5 v4 l-3 2.2 h-8.5z" fill="#40b8d8" stroke="#1a5a70" stroke-width="0.6" />
<rect x="193.0" y="35.0" width="2.6" height="5.0" fill="#d8b040" stroke="#604010" stroke-width="0.5"/>
<rect x="197.0" y="34.0" width="2.6" height="6.0" fill="#d8b040" stroke="#604010" stroke-width="0.5"/>
<rect x="200.0" y="36.5" width="2.0" height="3.5" fill="#b08830" stroke="#604010" stroke-width="0.5"/>
<rect x="206.6" y="33.2" width="11.8" height="12.0" fill="#cfe6f7"/>
<rect x="208.0" y="34.5" width="9.5" height="9.5" fill="#48c4e8" stroke="#2080a0" stroke-width="0.5"/>
<rect x="209.0" y="36.0" width="4.0" height="2.6" fill="#f0f0f0" stroke="#223" stroke-width="0.6"/>
<rect x="212.0" y="40.0" width="4.5" height="2.6" fill="#f0f0f0" stroke="#223" stroke-width="0.6"/>
<path d="M211 38.6 v2.7 h1" fill="none" stroke="#223" stroke-width="0.7" />
<path d="M221.5 32.0 V45.0" fill="none" stroke="#b4b4b4" stroke-width="1.0" />
<rect x="226.5" y="35.0" width="9.0" height="8.8" fill="#58c8e8" stroke="#1a607c" stroke-width="0.7"/>
<rect x="227.6" y="33.8" width="6.8" height="2.0" fill="#e8d040" stroke="#806020" stroke-width="0.4"/>
<path d="M228 38 h6.4 M228 40 h6.4 M228 42 h6.4" fill="none" stroke="#103848" stroke-width="0.8" />
<path d="M229.2 37 v6" fill="none" stroke="#c03030" stroke-width="0.8" />
<rect x="241.8" y="35.0" width="8.4" height="8.8" fill="#e8e8e8" stroke="#333" stroke-width="0.8"/>
<path d="M243 37.5 h4 M243 39.7 h4 M243 41.9 h4" fill="none" stroke="#444" stroke-width="0.8" />
<path d="M247 36 l1.5 1.8 l3-3.6" fill="none" stroke="#222" stroke-width="1.0" />
<circle cx="260.9" cy="39.6" r="4.8" fill="#c8c8c8" stroke="#8a8a8a" stroke-width="1.2"/>
<path d="M260.9 36.8 v3 l2 1.4" fill="none" stroke="#777" stroke-width="0.9" />
<rect x="271.5" y="34.5" width="5.5" height="3.6" fill="#889" stroke="#223" stroke-width="0.7"/>
<path d="M274 38 v5 h3.5 M274 40.5 h3.5" fill="none" stroke="#223" stroke-width="0.9" />
<rect x="277.0" y="39.0" width="3.4" height="2.4" fill="#ccd" stroke="#223" stroke-width="0.6"/>
<rect x="277.0" y="42.0" width="3.4" height="2.4" fill="#ccd" stroke="#223" stroke-width="0.6"/>
<path d="M284.3 32.0 V45.0" fill="none" stroke="#b4b4b4" stroke-width="1.0" />
<path d="M289.8 38.5 l5.5-3 h4.4 v5.8 l-5.5 3 h-4.4z" fill="#48b4dc" stroke="#2a7898" stroke-width="0.6" />
<path d="M291 41 l7-3.6" fill="none" stroke="#d0f0fc" stroke-width="1.0" />
<rect x="305.0" y="34.6" width="7.8" height="9.2" fill="#f4f4f4" stroke="#222" stroke-width="0.9"/>
<path d="M308.8 42 v-4.6 M307 39 l1.8-2 l1.8 2" fill="none" stroke="#222" stroke-width="1.0" />
<path d="M318.8 32.0 V45.0" fill="none" stroke="#b4b4b4" stroke-width="1.0" />
<rect x="324.0" y="34.6" width="9.8" height="9.4" fill="#2858c8" stroke="#1a2a70" stroke-width="0.6"/>
<rect x="325.0" y="35.6" width="3.0" height="3.0" fill="#50d0f0"/>
<rect x="329.4" y="35.6" width="3.4" height="3.0" fill="#f0e040"/>
<rect x="325.0" y="40.0" width="3.0" height="3.0" fill="#f0e040"/>
<rect x="329.4" y="40.0" width="3.4" height="3.0" fill="#60d8f0"/>
<rect x="339.2" y="34.6" width="8.6" height="9.4" fill="#f0e8a0" stroke="#705020" stroke-width="0.7"/>
<path d="M340.5 37 h6 M340.5 39.3 h6 M340.5 41.6 h6" fill="none" stroke="#c03020" stroke-width="0.9" />
<path d="M341.6 35.5 v8" fill="none" stroke="#2050c0" stroke-width="0.8" />
<rect x="353.3" y="34.5" width="6.0" height="3.8" fill="#778" stroke="#223" stroke-width="0.7"/>
<path d="M356 38.3 v5 h3.5 M356 40.8 h3.5" fill="none" stroke="#223" stroke-width="0.9" />
<rect x="359.3" y="39.3" width="3.4" height="2.4" fill="#ccd" stroke="#223" stroke-width="0.6"/>
<rect x="359.3" y="42.2" width="3.4" height="2.2" fill="#ccd" stroke="#223" stroke-width="0.6"/>
<rect x="369.3" y="34.6" width="8.4" height="9.2" fill="#f4f4f4" stroke="#222" stroke-width="0.9"/>
<path d="M372 37 h3.5 v4 h-3.5z" fill="none" stroke="#222" stroke-width="0.8" />
<path d="M375 35 l2.4 2.4" fill="none" stroke="#222" stroke-width="0.8" />
<path d="M383.5 32.0 V45.0" fill="none" stroke="#b4b4b4" stroke-width="1.0" />
<rect x="388.5" y="34.8" width="8.8" height="9.0" fill="#e8f0fc" stroke="#3050b0" stroke-width="0.9"/>
<rect x="390.0" y="35.5" width="2.2" height="7.6" fill="#4060c8"/>
<rect x="393.6" y="35.5" width="2.2" height="7.6" fill="#4060c8"/>
<path d="M401.5 32.0 V45.0" fill="none" stroke="#b4b4b4" stroke-width="1.0" />
<path d="M406 37.5 q5.2-4 10.4 0 l-1.4 1.6 l-2-1 v1.4 l2 3.8 h-7.6 l2-3.8 v-1.4 l-2 1z" fill="#30a8b0" stroke="#186870" stroke-width="0.6" />
<circle cx="426.0" cy="39.5" r="4.9" fill="#38a8c0" stroke="#1a6078" stroke-width="0.8"/>
<text x="426" y="42.6" font-size="8" font-weight="bold" fill="#fff" text-anchor="middle">?</text>
<rect x="165.2" y="49.0" width="11.6" height="11.4" fill="#fbfbfb" stroke="#c03030" stroke-width="1.0"/>
<path d="M167.5 53 h5.5 q2 0 2 2 q0 2 -2 2 h-3" fill="none" stroke="#d04040" stroke-width="1.4" />
<rect x="166.5" y="50.0" width="2.5" height="2.2" fill="#e8d060"/>
<rect x="180.4" y="49.0" width="11.6" height="11.4" fill="#fbfbfb" stroke="#c03030" stroke-width="1.0"/>
<path d="M181.4 54 h5 v-4 h4.6 v9.4 h-9.6z" fill="#c83838" />
<rect x="185.0" y="50.5" width="2.4" height="2.4" fill="#e8d870"/>
<rect x="195.4" y="49.0" width="11.6" height="11.4" fill="#fbfbfb" stroke="#c03030" stroke-width="1.0"/>
<path d="M198 58 q0-6 6.5-6.5" fill="none" stroke="#c83838" stroke-width="3.0" />
<path d="M198.5 57 q1-4 5-5" fill="none" stroke="#f0b0b0" stroke-width="1.0" />
<rect x="210.2" y="49.0" width="11.6" height="11.4" fill="#fbfbfb" stroke="#c03030" stroke-width="1.0"/>
<rect x="212.0" y="50.4" width="2.6" height="2.6" fill="#d04040"/>
<path d="M212 55.5 h8" fill="none" stroke="#eee" stroke-width="0.5" />
<path d="M225.7 49.0 V62.0" fill="none" stroke="#b4b4b4" stroke-width="1.0" />
<rect x="228.0" y="47.8" width="14.0" height="14.0" fill="#cfe6f7"/>
<path d="M230.5 55.5 l2.4 2.6 l4.6-6" fill="none" stroke="#108020" stroke-width="1.8" />
<path d="M236 57.5 h4.5" fill="none" stroke="#334" stroke-width="1.0" />
<path d="M245 55 l2.2 2.4 l4-5.6" fill="none" stroke="#108020" stroke-width="1.7" />
<rect x="250.0" y="55.5" width="5.4" height="4.4" fill="#a8a8a8" stroke="#666" stroke-width="0.6"/>
<rect x="246.5" y="57.4" width="4.0" height="3.0" fill="#b8b8b8" stroke="#777" stroke-width="0.5"/>
<ellipse cx="263.0" cy="52.5" rx="3.4" ry="2.2" fill="#c8c8c8" stroke="#777" stroke-width="0.7"/>
<rect x="259.6" y="52.5" width="6.8" height="4.5" fill="#bcbcbc" stroke="#777" stroke-width="0.6"/>
<ellipse cx="266.4" cy="57.5" rx="3.2" ry="2.0" fill="#c8c8c8" stroke="#777" stroke-width="0.7"/>
<rect x="263.2" y="57.0" width="6.4" height="3.0" fill="#b4b4b4" stroke="#777" stroke-width="0.6"/>
<path d="M274.7 49.0 V62.0" fill="none" stroke="#b4b4b4" stroke-width="1.0" />
<path d="M279.5 57.5 h4 q2 0 2-2 q0-2 2-2 h2" fill="none" stroke="#344" stroke-width="1.2" />
<circle cx="279.6" cy="57.5" r="1.2" fill="#fff" stroke="#223" stroke-width="0.7"/>
<circle cx="289.4" cy="53.5" r="1.2" fill="#fff" stroke="#223" stroke-width="0.7"/>
<circle cx="284.0" cy="52.0" r="1.2" fill="#fff" stroke="#223" stroke-width="0.7"/>
<path d="M293 59.5 h12" fill="none" stroke="#666" stroke-width="1.0" />
<path d="M296 58.5 l6-7.5 l2 1.4 l-6 7.3z" fill="#c0c0c0" stroke="#777" stroke-width="0.6" />
<path d="M309 52 v7 h6 v-3 h4.5" fill="none" stroke="#344" stroke-width="1.2" />
<circle cx="309.0" cy="52.0" r="1.1" fill="#223"/>
<circle cx="319.6" cy="56.0" r="1.1" fill="#223"/>
<path d="M323.2 49.0 V62.0" fill="none" stroke="#b4b4b4" stroke-width="1.0" />
<path d="M334.0 57.5 l3.4 3.4" fill="none" stroke="#d8b020" stroke-width="2.0" />
<circle cx="331.6" cy="54.2" r="4.4" fill="#dff4f8" stroke="#2a98a8" stroke-width="1.3"/>
<path d="M329.6 52 l4 4.4 M333.6 52 l-4 4.4" fill="none" stroke="#123" stroke-width="1.5" />
<path d="M349.5 57.5 l3.4 3.4" fill="none" stroke="#d8b020" stroke-width="2.0" />
<circle cx="347.1" cy="54.2" r="4.4" fill="#dff4f8" stroke="#2a98a8" stroke-width="1.3"/>
<circle cx="347.1" cy="54.2" r="2.4" fill="#e8c838"/>
<path d="M364.5 57.5 l3.4 3.4" fill="none" stroke="#d8b020" stroke-width="2.0" />
<circle cx="362.1" cy="54.2" r="4.4" fill="#dff4f8" stroke="#2a98a8" stroke-width="1.3"/>
<path d="M359.6 54.2 h5 M362.1 51.7 v5" fill="none" stroke="#123" stroke-width="1.4" />
<path d="M371.6 49.0 V62.0" fill="none" stroke="#b4b4b4" stroke-width="1.0" />
<path d="M379.5 49.5 h3 v3.8 h3.8 v3 h-3.8 v3.8 h-3 v-3.8 h-3.8 v-3 h3.8z" fill="#f4f4f4" stroke="#888" stroke-width="0.9" />
<rect x="390.6" y="49.2" width="11.0" height="11.0" fill="#f6f6f6" stroke="#777" stroke-width="0.9"/>
<rect x="392.6" y="51.2" width="7.0" height="7.0" fill="none" stroke="#999" stroke-width="0.7"/>
<path d="M405.2 49.0 V62.0" fill="none" stroke="#b4b4b4" stroke-width="1.0" />
<rect x="409.2" y="49.0" width="11.6" height="11.6" fill="#fdfdfd" stroke="#c03838" stroke-width="1.0"/>
<path d="M415 51 q3.2 0 3.2 3 q0 1.6-1.6 2.8 v1.6 h-3.2 v-1.6 q-1.6-1.2-1.6-2.8 q0-3 3.2-3z" fill="#f4e858" stroke="#444" stroke-width="0.6" />
<path d="M428.5 53 h5 q2 0 2 2.4 M435.5 51.5 q3 0 3 3 q0 3-2.4 4 q-2 0-2-3" fill="none" stroke="#777" stroke-width="1.1" />
<circle cx="436.6" cy="54.0" r="1.6" fill="#f0f0f0" stroke="#888" stroke-width="0.6"/>
<rect x="443.5" y="49.2" width="8.0" height="9.6" fill="#d87878" stroke="#a03030" stroke-width="0.7"/>
<rect x="445.2" y="50.6" width="9.4" height="10.0" fill="#fbfbfb" stroke="#b04040" stroke-width="0.8"/>
<path d="M450 52.3 q2.6 0 2.6 2.4 q0 1.4-1.3 2.2 v1.5 h-2.6 v-1.5 q-1.3-0.8-1.3-2.2 q0-2.4 2.6-2.4z" fill="#f4e858" stroke="#555" stroke-width="0.5" />
<ellipse cx="146.5" cy="61.5" rx="5.2" ry="9.4" fill="#38b8e0" stroke="#155a78" stroke-width="0.8"/>
<path d="M146.5 52.1 h4.5 v18.8 h-4.5z" fill="#38b8e0" />
<ellipse cx="151.3" cy="61.5" rx="5.4" ry="9.4" fill="#f0e890" stroke="#4a4a30" stroke-width="0.8"/>
<ellipse cx="151.8" cy="61.5" rx="2.2" ry="4.6" fill="#d8d8d8" stroke="#555" stroke-width="0.7"/>
<path d="M146.5 52.1 h4.8 M146.5 70.9 h4.8" fill="none" stroke="#155a78" stroke-width="0.7" />
<path d="M136.5 74 H162" fill="none" stroke="#c8c8c8" stroke-width="1.0" />
<rect x="139.0" y="76.7" width="18.6" height="16.6" fill="#cde4f6"/>
<path d="M146 79.5 v10 l2.3-2.2 l1.7 3.8 l1.5-0.7 l-1.7-3.7 h3.2z" fill="#fff" stroke="#445" stroke-width="0.8" />
<circle cx="148.0" cy="102.7" r="5.9" fill="#fff" stroke="#222" stroke-width="1.0"/>
<path d="M148 102.7 v-5.9 a5.9 5.9 0 0 1 5.9 5.9z" fill="#111" />
<path d="M148 102.7 v5.9 a5.9 5.9 0 0 1 -5.9 -5.9z" fill="#111" />
<circle cx="148.0" cy="119.3" r="4.4" fill="none" stroke="#30a8c8" stroke-width="1.2"/>
<path d="M148 113.3 v12 M142 119.3 h12" fill="none" stroke="#557" stroke-width="0.8" />
<circle cx="148.0" cy="119.3" r="1.8" fill="#e02020"/>
<rect x="143.0" y="130.6" width="10.0" height="10.0" fill="none" stroke="#333" stroke-width="0.8"/>
<rect x="141.8" y="129.4" width="2.4" height="2.4" fill="#fff" stroke="#222" stroke-width="0.6"/>
<rect x="151.8" y="129.4" width="2.4" height="2.4" fill="#fff" stroke="#222" stroke-width="0.6"/>
<rect x="141.8" y="139.4" width="2.4" height="2.4" fill="#fff" stroke="#222" stroke-width="0.6"/>
<rect x="151.8" y="139.4" width="2.4" height="2.4" fill="#fff" stroke="#222" stroke-width="0.6"/>
<path d="M144.5 138.8 l6-6 l1.8 1.8 l-6 6z" fill="#e89030" stroke="#a05010" stroke-width="0.5" />
<path d="M143 147.2 h5 v4 h5 v7 h-10z" fill="none" stroke="#c82020" stroke-width="1.5" />
<circle cx="143.0" cy="147.2" r="1.1" fill="#c82020"/>
<circle cx="148.0" cy="147.2" r="1.1" fill="#c82020"/>
<circle cx="153.0" cy="151.2" r="1.1" fill="#c82020"/>
<circle cx="153.0" cy="158.2" r="1.1" fill="#c82020"/>
<circle cx="143.0" cy="158.2" r="1.1" fill="#c82020"/>
<rect x="143.2" y="164.8" width="9.8" height="10.4" fill="#e8f4f4" stroke="#2a7080" stroke-width="1.0"/>
<path d="M144.8 173.0 l5.5-5.8 l1.9 1.8 l-5.5 5.8z" fill="#e89030" stroke="#a05010" stroke-width="0.5" />
<path d="M143.5 192 l6-6.5 l1.8 1.8 l-6 6.5z" fill="#e89030" stroke="#a05010" stroke-width="0.5" />
<text x="151" y="186" font-size="7" font-weight="bold" fill="#a01010">2</text>
<text x="148" y="208" font-size="14.5" font-style="italic" font-weight="bold" fill="#3a7080" text-anchor="middle">E</text>
<path d="M139 213.5 H158" fill="none" stroke="#b8b8b8" stroke-width="1.0" />
<circle cx="148.0" cy="224.5" r="4.4" fill="none" stroke="#30a8c8" stroke-width="1.2"/>
<path d="M148 218.5 v12 M142 224.5 h12" fill="none" stroke="#557" stroke-width="0.8" />
<circle cx="148.0" cy="224.5" r="1.8" fill="#e02020"/>
<circle cx="148.0" cy="224.5" r="4.4" fill="none" stroke="#d8d060" stroke-width="0.6"/>
<rect x="143.0" y="236.5" width="10.0" height="10.0" fill="none" stroke="#333" stroke-width="0.8"/>
<rect x="141.8" y="235.3" width="2.4" height="2.4" fill="#fff" stroke="#222" stroke-width="0.6"/>
<rect x="151.8" y="235.3" width="2.4" height="2.4" fill="#fff" stroke="#222" stroke-width="0.6"/>
<rect x="141.8" y="245.3" width="2.4" height="2.4" fill="#fff" stroke="#222" stroke-width="0.6"/>
<rect x="151.8" y="245.3" width="2.4" height="2.4" fill="#fff" stroke="#222" stroke-width="0.6"/>
<path d="M144.5 244.7 l6-6 l1.8 1.8 l-6 6z" fill="#e89030" stroke="#a05010" stroke-width="0.5" />
<rect x="147.0" y="257.7" width="6.0" height="5.5" fill="#f0e070"/>
<path d="M143 252.2 h5 v4 h5 v7 h-10z" fill="none" stroke="#c82020" stroke-width="1.5" />
<circle cx="143.0" cy="252.2" r="1.1" fill="#c82020"/>
<circle cx="148.0" cy="252.2" r="1.1" fill="#c82020"/>
<circle cx="153.0" cy="256.2" r="1.1" fill="#c82020"/>
<circle cx="153.0" cy="263.2" r="1.1" fill="#c82020"/>
<circle cx="143.0" cy="263.2" r="1.1" fill="#c82020"/>
<rect x="143.2" y="269.8" width="9.8" height="10.4" fill="#f0e890" stroke="#2a7080" stroke-width="1.0"/>
<path d="M144.8 278.0 l5.5-5.8 l1.9 1.8 l-5.5 5.8z" fill="#e89030" stroke="#a05010" stroke-width="0.5" />
<path d="M136.5 466 H162" fill="none" stroke="#b0b0b0" stroke-width="1.0" />
<ellipse cx="143.0" cy="475.0" rx="3.4" ry="1.6" fill="#e8d870" stroke="#6a5a20" stroke-width="0.6"/>
<ellipse cx="143.0" cy="477.8" rx="3.4" ry="1.6" fill="#e8d870" stroke="#6a5a20" stroke-width="0.6"/>
<ellipse cx="143.0" cy="480.6" rx="3.4" ry="1.6" fill="#e8d870" stroke="#6a5a20" stroke-width="0.6"/>
<ellipse cx="143.0" cy="483.4" rx="3.4" ry="1.6" fill="#e8d870" stroke="#6a5a20" stroke-width="0.6"/>
<ellipse cx="143.0" cy="486.2" rx="3.4" ry="1.6" fill="#e8d870" stroke="#6a5a20" stroke-width="0.6"/>
<rect x="149.0" y="472.5" width="6.6" height="10.0" fill="#8aa0b8" stroke="#445" stroke-width="0.6"/>
<path d="M149 482.5 l3.3 4.5 l3.3-4.5z" fill="#d8c050" stroke="#554" stroke-width="0.5" />
<rect x="148.0" y="481.0" width="4.0" height="4.0" fill="#e8c838" stroke="#554" stroke-width="0.5"/>
<rect x="7.5" y="65.8" width="5.6" height="5.6" fill="#fff" stroke="#999" stroke-width="0.7"/>
<path d="M8.8 68.6 h3" fill="none" stroke="#555" stroke-width="0.8" />
<path d="M13.3 68.5 h3 M22 72.5 v8.5 h7" fill="none" stroke="#bbb" stroke-width="0.8" />
<path d="M20 65 l3 3.3 l-3 3.3 l-3-3.3z" fill="#999" stroke="#666" stroke-width="0.5" />
<circle cx="27.0" cy="68.0" r="3.4" fill="#50b8e0" stroke="#2a7088" stroke-width="0.6"/>
<path d="M25.5 66.5 q1.5-1.5 3 0 v2 h-3z" fill="#e8d850" />
<rect x="29.3" y="75.6" width="9.4" height="9.4" fill="#fff" stroke="#d02020" stroke-width="1.1"/>
<rect x="31.3" y="77.3" width="5.4" height="6.0" fill="#58b8e0" stroke="#2a7088" stroke-width="0.5"/>
<rect x="32.3" y="76.8" width="3.4" height="2.0" fill="#d8f0fa" stroke="#2a7088" stroke-width="0.4"/>
<path d="M171.2 466.5 v6 M171.2 472.5 l-5 5 M171.2 472.5 l5.5 4.5" fill="none" stroke="#222" stroke-width="0.9" />
<path d="M171.2 467 v5" fill="none" stroke="#e02020" stroke-width="1.2" />
<path d="M171.2 472.5 l-4.6 4.6" fill="none" stroke="#20c030" stroke-width="1.2" />
<path d="M171.2 472.5 l5 4" fill="none" stroke="#2030e0" stroke-width="1.2" />
<path d="M180.0 466.0 V479.0" fill="none" stroke="#b4b4b4" stroke-width="1.0" />
<path d="M184 477 l3-4 h8 l-3 4z" fill="#f4e890" stroke="#887" stroke-width="0.6" />
<path d="M187.5 474.5 l5-6 l1.8 1.5 l-5 6z" fill="#40a8d8" stroke="#246" stroke-width="0.5" />
<rect x="199.1" y="470.0" width="6.5" height="6.5" fill="#bdbdbd" stroke="#666" stroke-width="0.7"/>
<rect x="202.6" y="467.0" width="5.5" height="5.0" fill="#d4d4d4" stroke="#777" stroke-width="0.6"/>
<ellipse cx="216.5" cy="473.0" rx="2.6" ry="4.0" fill="#d8d8d8" stroke="#555" stroke-width="0.7"/>
<rect x="216.5" y="469.0" width="5.0" height="8.0" fill="#c4c4c4"/>
<ellipse cx="221.5" cy="473.0" rx="2.6" ry="4.0" fill="#e4e4e4" stroke="#555" stroke-width="0.7"/>
<path d="M216.5 469.0 h5 M216.5 477.0 h5" fill="none" stroke="#555" stroke-width="0.7" />
<rect x="220.0" y="466.0" width="3.0" height="3.0" fill="#ddd" stroke="#777" stroke-width="0.5"/>
<path d="M230 478 l2.5-7 l5-1.5 l2 2 l-2.5 7z" fill="#c8c8c8" stroke="#666" stroke-width="0.7" />
<path d="M231.5 475 h6 M232.3 473 h6" fill="none" stroke="#777" stroke-width="0.6" />
<path d="M243.0 466.0 V479.0" fill="none" stroke="#b4b4b4" stroke-width="1.0" />
<path d="M248.5 470.5 l2-1.6 h8 v6.4 l-2 1.6 h-8z" fill="#2a90a8" stroke="#0e4858" stroke-width="0.7" />
<path d="M250 472.5 h6.5 v3 h-6.5z" fill="#70d0e0" />
<ellipse cx="265.0" cy="472.8" rx="2.2" ry="3.8" fill="#60d0e0" stroke="#0e4858" stroke-width="0.7"/>
<rect x="265.0" y="469.0" width="7.0" height="7.6" fill="#2a98b0"/>
<ellipse cx="272.0" cy="472.8" rx="2.2" ry="3.8" fill="#b8ecf4" stroke="#0e4858" stroke-width="0.7"/>
<path d="M265 469.0 h7 M265 476.6 h7" fill="none" stroke="#0e4858" stroke-width="0.7" />
<path d="M277.8 466.0 V479.0" fill="none" stroke="#b4b4b4" stroke-width="1.0" />
<rect x="280.5" y="465.5" width="15.0" height="14.0" fill="#cde4f6"/>
<path d="M282.5 470.3 l5.5-2.6 l5.5 2.6 l-5.5 2.6z" fill="#b0e8f4" stroke="#2a7888" stroke-width="0.6" />
<path d="M282.5 470.3 l5.5 2.6 v5.4 l-5.5-2.6z" fill="#48b8d8" stroke="#2a7888" stroke-width="0.6" />
<path d="M288.0 472.9 l5.5-2.6 v5.4 l-5.5 2.6z" fill="#e8f8fc" stroke="#2a7888" stroke-width="0.6" />
<path d="M297.5 470.3 l5.5-2.6 l5.5 2.6 l-5.5 2.6z" fill="#d0ecf4" stroke="#2a7888" stroke-width="0.6" />
<path d="M297.5 470.3 l5.5 2.6 v5.4 l-5.5-2.6z" fill="#e8f4f8" stroke="#2a7888" stroke-width="0.6" />
<path d="M303.0 472.9 l5.5-2.6 v5.4 l-5.5 2.6z" fill="#38b0a0" stroke="#2a7888" stroke-width="0.6" />
<path d="M312.7 470.3 l5.5-2.6 l5.5 2.6 l-5.5 2.6z" fill="#e0f0f4" stroke="#2a7888" stroke-width="0.6" />
<path d="M312.7 470.3 l5.5 2.6 v5.4 l-5.5-2.6z" fill="#b8dce8" stroke="#2a7888" stroke-width="0.6" />
<path d="M318.2 472.9 l5.5-2.6 v5.4 l-5.5 2.6z" fill="#68c0d8" stroke="#2a7888" stroke-width="0.6" />
<path d="M327.0 466.0 V479.0" fill="none" stroke="#b4b4b4" stroke-width="1.0" />
<path d="M336.6 467.5 q3.4 0 3.4 3.2 q0 1.8-1.7 3 v1.8 h-3.4 v-1.8 q-1.7-1.2-1.7-3 q0-3.2 3.4-3.2z" fill="#f8f080" stroke="#666" stroke-width="0.7" />
<path d="M335.2 477 h2.8" fill="none" stroke="#666" stroke-width="1.0" />
<path d="M344.0 471.8 h5 l-2.5 3z" fill="#222" />
<path d="M354.0 466.0 V479.0" fill="none" stroke="#b4b4b4" stroke-width="1.0" />
<path d="M357.5 477.5 l2.5-5 h9 l-2.5 5z" fill="#f4e070" stroke="#776" stroke-width="0.7" />
<path d="M364 472 v-4.5" fill="none" stroke="#444" stroke-width="0.9" />
<ellipse cx="375.0" cy="473.1" rx="2.4" ry="4.0" fill="#d8d8d8" stroke="#444" stroke-width="0.8"/>
<rect x="375.0" y="469.1" width="6.0" height="8.0" fill="#c0c0c0"/>
<ellipse cx="381.0" cy="473.1" rx="2.4" ry="4.0" fill="#efefef" stroke="#444" stroke-width="0.8"/>
<path d="M375 469.1 h6 M375 477.1 h6" fill="none" stroke="#444" stroke-width="0.8" />
<rect x="379.5" y="466.5" width="3.0" height="3.0" fill="#ddd" stroke="#666" stroke-width="0.5"/>
<rect x="387.3" y="469.9" width="11.0" height="7.0" fill="#444" stroke="#222" stroke-width="0.6" rx="1.0"/>
<circle cx="392.8" cy="473.5" r="2.3" fill="#ddd" stroke="#111" stroke-width="0.8"/>
<rect x="390.5" y="468.1" width="4.0" height="2.0" fill="#444"/>
<path d="M401.5 471.8 h5 l-2.5 3z" fill="#222" />
<path d="M410.8 466.0 V479.0" fill="none" stroke="#b4b4b4" stroke-width="1.0" />
<path d="M415.5 478 l7-8.6 l2 1.6 l-7 8.6z" fill="#e8d040" stroke="#665" stroke-width="0.6" />
<path d="M430.5 467 v6 M429 467 v3.5 h3 v-3.5" fill="none" stroke="#556" stroke-width="0.9" />
<rect x="429.5" y="473.0" width="2.0" height="5.5" fill="#e8a030" stroke="#654" stroke-width="0.5"/>
<path d="M436.5 467 q-1.5 2 0 4 v1" fill="none" stroke="#556" stroke-width="1.0" />
<rect x="435.5" y="472.5" width="2.0" height="6.0" fill="#e8a030" stroke="#654" stroke-width="0.5"/>
<path d="M442.9 471.8 h5 l-2.5 3z" fill="#222" />
<rect x="452.0" y="467.0" width="11.0" height="10.5" fill="#58b0e0" stroke="#345" stroke-width="0.7"/>
<path d="M452 477.5 l3.5-4.5 l2.5 2.5 l2-2 l3 4z" fill="#38a048" />
<circle cx="460.0" cy="470.0" r="1.3" fill="#f8f0a0"/>
</svg>
</body></html>
